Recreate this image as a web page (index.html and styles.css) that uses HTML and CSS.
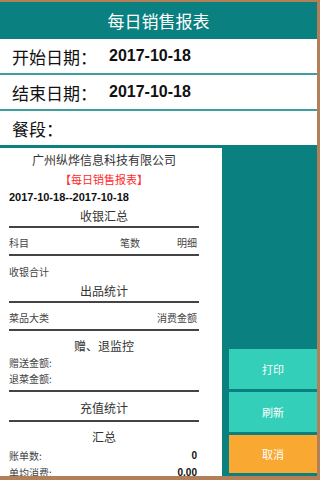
FILE: index.html
```html
<!DOCTYPE html>
<html lang="zh-CN">
<head>
  <meta charset="UTF-8" />
  <meta name="viewport" content="width=device-width, initial-scale=1.0" />
  <title>每日销售报表</title>
  <link rel="stylesheet" href="styles.css">
</head>
<body>
  <div class="app">
    <div class="top-bar">每日销售报表</div>

    <div class="field-row">
      <span class="field-label">开始日期：</span>
      <span class="field-value">2017-10-18</span>
    </div>
    <div class="field-row">
      <span class="field-label">结束日期：</span>
      <span class="field-value">2017-10-18</span>
    </div>
    <div class="field-row last">
      <span class="field-label">餐段：</span>
    </div>

    <div class="main">
      <!-- Receipt preview -->
      <div class="paper">
        <div class="company">广州纵烨信息科技有限公司</div>
        <div class="report-name">【每日销售报表】</div>
        <div class="range">2017-10-18--2017-10-18</div>

        <div class="sec-title">收银汇总</div>
        <div class="rule"></div>
        <div class="col-head">
          <span class="grow">科目</span>
          <span>笔数</span>
          <span class="detail">明细</span>
        </div>
        <div class="rule"></div>
        <div class="plain first">收银合计</div>

        <div class="sec-title">出品统计</div>
        <div class="rule"></div>
        <div class="col-head">
          <span class="grow">菜品大类</span>
          <span>消费金额</span>
        </div>
        <div class="rule"></div>

        <div class="sec-title gap">赠、退监控</div>
        <div class="plain tight">赠送金额:</div>
        <div class="plain">退菜金额:</div>
        <div class="rule after-list"></div>

        <div class="sec-title gap-lg">充值统计</div>
        <div class="rule close"></div>

        <div class="sec-title gap">汇总</div>
        <div class="kv"><span>账单数:</span><span class="num">0</span></div>
        <div class="kv"><span>单均消费:</span><span class="num">0.00</span></div>
      </div>

      <!-- Actions -->
      <div class="actions">
        <button class="btn">打印</button>
        <button class="btn">刷新</button>
        <button class="btn cancel">取消</button>
      </div>
    </div>
  </div>
</body>
</html>
```

FILE: styles.css
```css
:root {
  --teal: #0a8080;
  --teal-line: #3f9f9f;
  --frame: #b27f57;
  --mint: #33cfb8;
  --orange: #f9a832;
  --ink: #333;
}
* { box-sizing: border-box; }
body {
  margin: 0;
  font-family: 'Noto Sans CJK SC', sans-serif;
}
.app {
  width: 320px;
  height: 480px;
  border-top: 2px solid var(--frame);
  border-right: 3px solid var(--frame);
  border-bottom: 4px solid var(--frame);
  background: var(--teal);
  display: flex;
  flex-direction: column;
  overflow: hidden;
}
/* Title bar */
.top-bar {
  height: 37px;
  line-height: 37px;
  text-align: center;
  color: #fff;
  font-size: 17px;
}
/* Form rows */
.field-row {
  height: 36px;
  background: #fff;
  border-bottom: 2px solid var(--teal-line);
  display: flex;
  align-items: center;
  padding-left: 12px;
  color: #111;
}
.field-row.last {
  border-bottom: none;
  height: 34px;
}
.field-label {
  width: 97px;
  font-size: 17px;
}
.field-value {
  font-family: 'Liberation Sans', Arial, sans-serif;
  font-weight: bold;
  font-size: 16px;
}
/* Main area */
.main {
  flex: 1;
  display: flex;
  margin-top: 3px;
  min-height: 0;
}
.paper {
  width: 222px;
  background: #fff;
  padding: 2px 23px 0 9px;
  color: var(--ink);
  font-size: 10px;
  overflow: hidden;
}
.company {
  text-align: center;
  font-size: 12px;
  line-height: 20px;
}
.report-name {
  text-align: center;
  font-size: 11px;
  line-height: 19px;
  color: #ff2a2a;
}
.range {
  font-family: 'Liberation Sans', Arial, sans-serif;
  font-weight: bold;
  font-size: 11px;
  line-height: 17px;
  color: #111;
}
.sec-title {
  text-align: center;
  font-size: 12px;
  line-height: 20px;
}
.sec-title.gap { margin-top: 5px; }
.sec-title.gap-lg { margin-top: 6px; }
.rule {
  height: 2px;
  background: #444;
}
.rule.after-list { margin-top: 3px; }
.rule.close { margin-top: 2px; }
.col-head {
  display: flex;
  padding: 3px 2px 0 0;
  line-height: 23px;
  color: #444;
}
.col-head .grow { flex: 1; }
.col-head .detail { margin-left: 37px; }
.plain {
  line-height: 17px;
  color: #444;
}
.plain.first {
  margin-top: 7px;
  line-height: 18px;
}
.plain.tight { line-height: 14px; }
.kv {
  display: flex;
  justify-content: space-between;
  line-height: 17px;
  color: #444;
  padding-right: 2px;
}
.num {
  font-family: 'Liberation Sans', Arial, sans-serif;
  font-weight: bold;
  color: #111;
}
/* Buttons */
.actions {
  flex: 1;
  display: flex;
  flex-direction: column;
  justify-content: flex-end;
  gap: 3px;
  padding: 0 0 3px 7px;
}
.btn {
  height: 40px;
  border: none;
  background: var(--mint);
  color: #fff;
  font-family: 'Noto Sans CJK SC', sans-serif;
  font-size: 11px;
  cursor: pointer;
}
.btn.cancel {
  background: var(--orange);
  height: 38px;
}
```
